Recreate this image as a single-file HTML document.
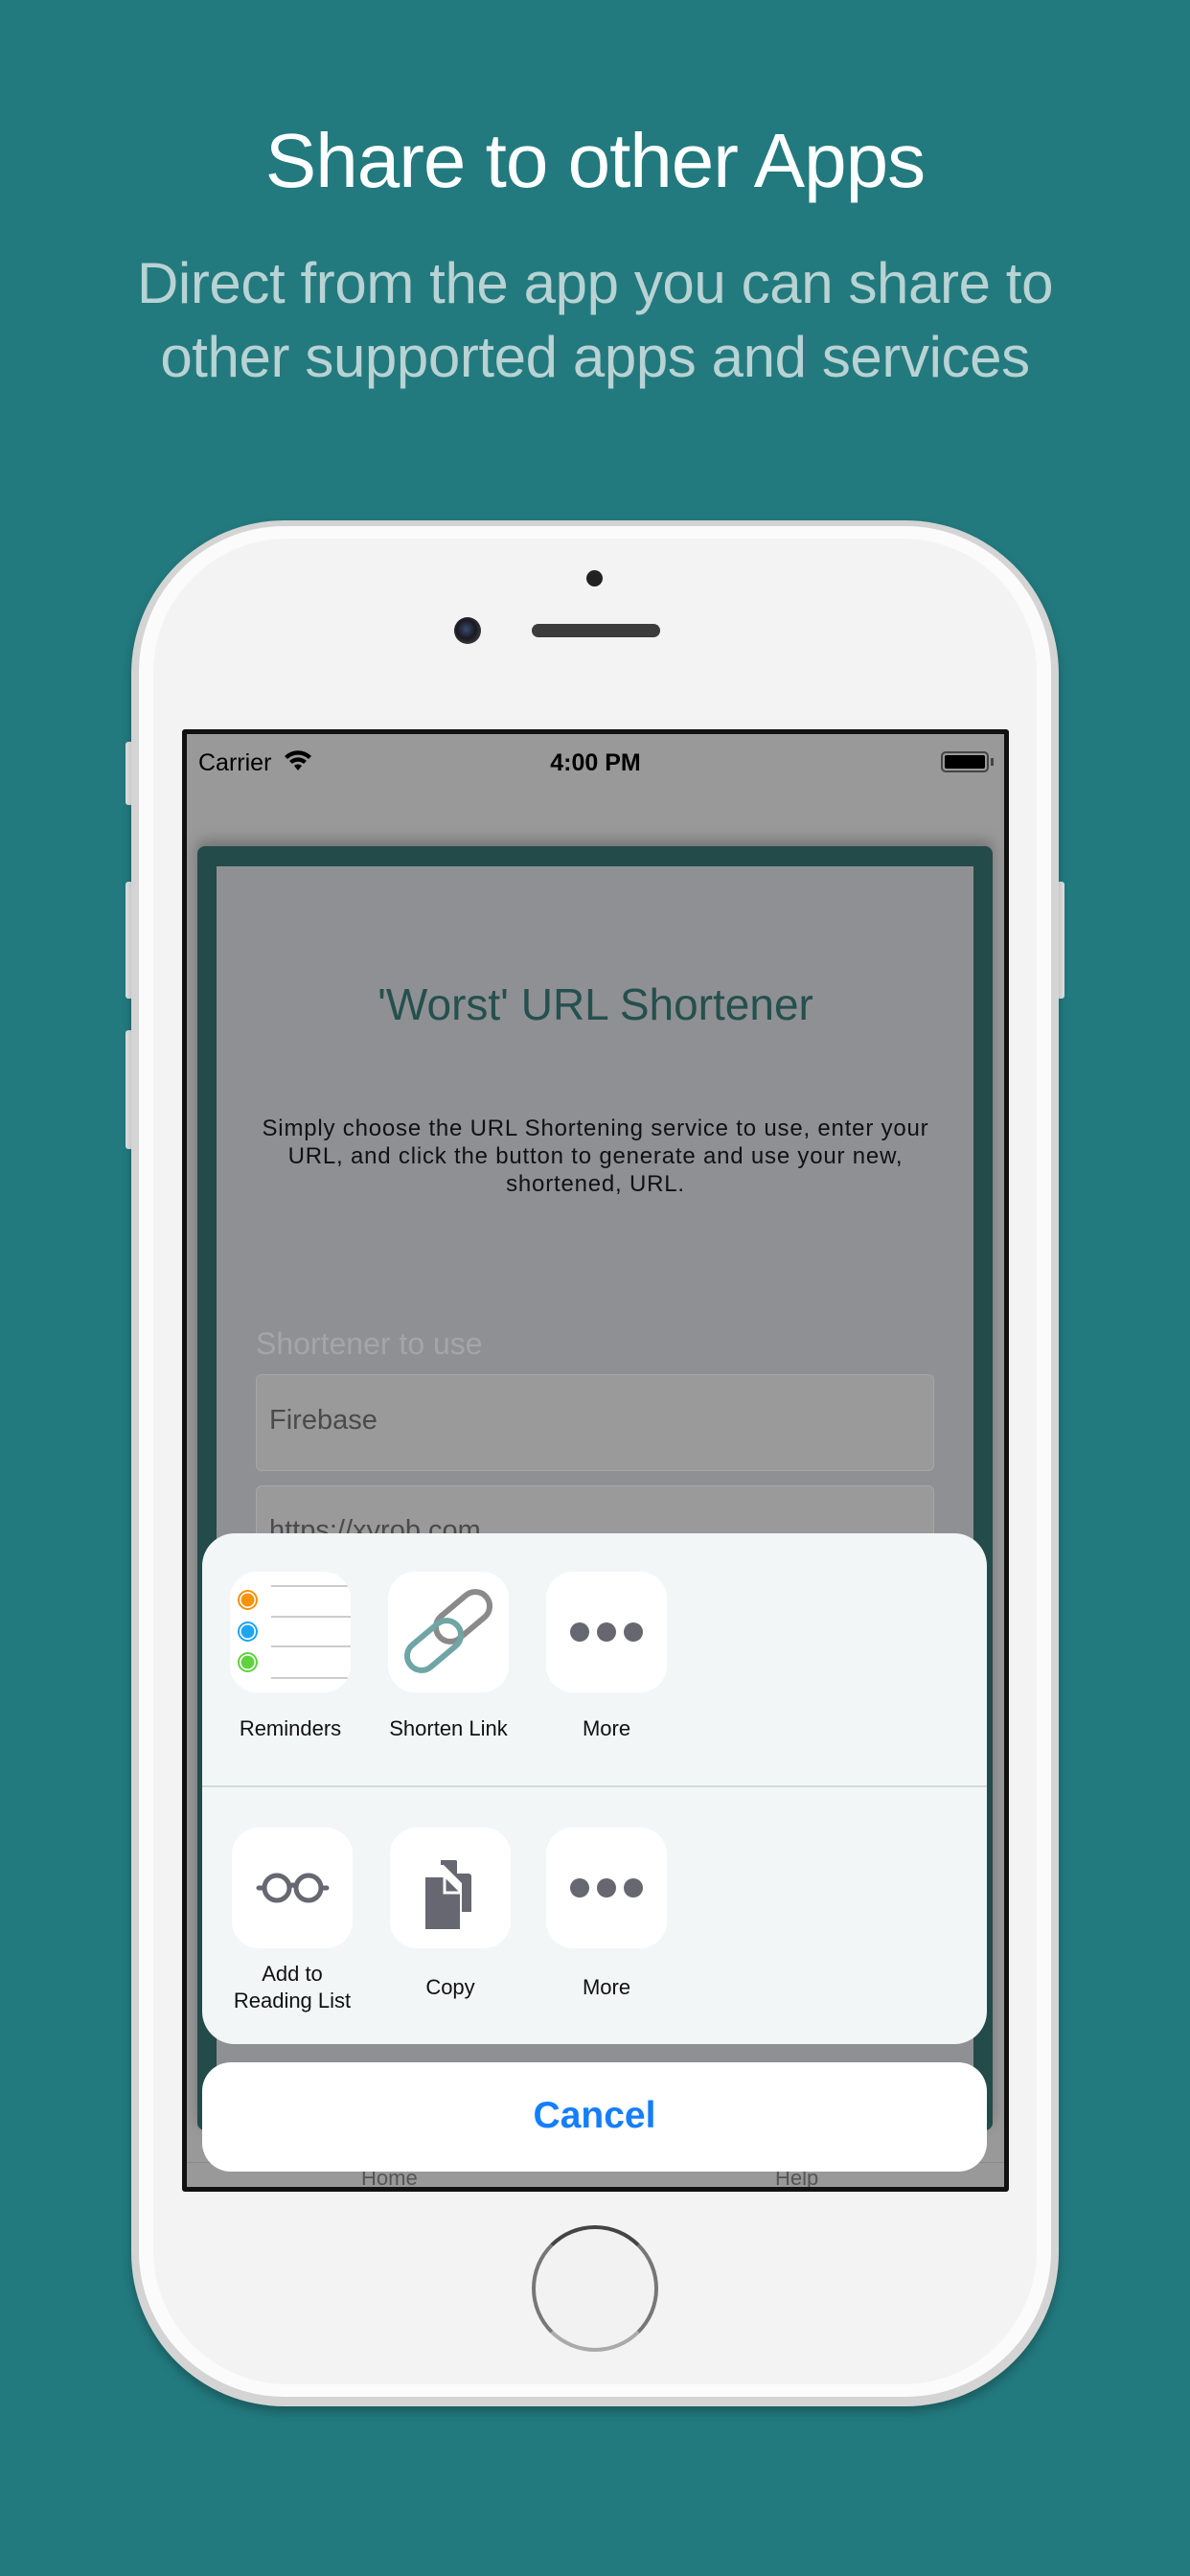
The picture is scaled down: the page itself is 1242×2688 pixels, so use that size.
<!DOCTYPE html>
<html><head><meta charset="utf-8"><style>
*{margin:0;padding:0;box-sizing:border-box}
body{width:1242px;height:2688px;background:#227a7e;position:relative;overflow:hidden;font-family:"Liberation Sans",sans-serif}
.a{position:absolute}
.t{left:0;width:1242px;text-align:center}
.lbl{position:absolute;font-size:22px;color:#111;text-align:center;width:200px;line-height:28px}
.ic{position:absolute;width:126px;height:126px;border-radius:28px;background:#fff}
</style></head><body>
<div class="a t" style="top:122px;font-size:80px;color:#fff;font-weight:300;letter-spacing:-1px">Share to other Apps</div>
<div class="a t" style="top:257px;font-size:60px;color:#b9d2d3;line-height:77px;letter-spacing:-0.4px">Direct from the app you can share to<br>other supported apps and services</div>

<div class="a" style="left:131px;top:774px;width:8px;height:66px;background:#e4e4e4;border-radius:3px"></div>
<div class="a" style="left:131px;top:920px;width:8px;height:122px;background:#e4e4e4;border-radius:3px"></div>
<div class="a" style="left:131px;top:1075px;width:8px;height:124px;background:#e4e4e4;border-radius:3px"></div>
<div class="a" style="left:1103px;top:920px;width:8px;height:122px;background:#e4e4e4;border-radius:3px"></div>

<div class="a" style="left:137px;top:543px;width:968px;height:1968px;border-radius:160px;background:#d4d4d4;box-shadow:0 6px 10px rgba(0,0,0,.25)"></div>
<div class="a" style="left:145px;top:549px;width:952px;height:1952px;border-radius:152px;background:#fbfbfb"></div>
<div class="a" style="left:160px;top:562px;width:922px;height:1926px;border-radius:140px;background:#f3f3f3"></div>
<div class="a" style="left:612px;top:595px;width:17px;height:17px;border-radius:50%;background:#222"></div>
<div class="a" style="left:474px;top:644px;width:28px;height:28px;border-radius:50%;background:radial-gradient(circle at 45% 45%,#3a4a70 0,#1a1a22 45%,#555 100%)"></div>
<div class="a" style="left:555px;top:651px;width:134px;height:14px;border-radius:7px;background:#3c3c3c"></div>
<div class="a" style="left:555px;top:2322px;width:132px;height:132px;border-radius:50%;border:4px solid #777;border-top-color:#444;border-bottom-color:#aaa;background:#f2f2f2"></div>

<div class="a" style="left:190px;top:761px;width:863px;height:1526px;background:#111;border-radius:3px"></div>
<div class="a" style="left:195px;top:766px;width:853px;height:1516px;background:#999;overflow:hidden">
  <div class="a" style="left:12px;top:16px;font-size:25px;color:#000">Carrier</div>
  <svg class="a" style="left:100px;top:14px" width="32" height="26" viewBox="0 0 32 26"><path d="M2 9a20 20 0 0 1 28 0l-3 3a16 16 0 0 0-22 0z M7 14a13 13 0 0 1 18 0l-3 3a9 9 0 0 0-12 0z M12 19a6 6 0 0 1 8 0l-4 5z" fill="#000"/></svg>
  <div class="a" style="left:0;width:853px;text-align:center;top:16px;font-size:25px;color:#000;font-weight:bold">4:00 PM</div>
  <div class="a" style="left:787px;top:18px;width:50px;height:22px;border:2px solid #444;border-radius:5px;padding:2px"><div style="width:100%;height:100%;background:#000;border-radius:2px"></div></div>
  <div class="a" style="left:839px;top:25px;width:3px;height:8px;background:#444"></div>
  <div class="a" style="left:11px;top:117px;width:830px;height:1340px;background:#234b49;border-radius:8px;box-shadow:0 -6px 14px rgba(0,0,0,.25)"></div>
  <div class="a" style="left:31px;top:138px;width:790px;height:1319px;background:#8f9094"></div>
  <div class="a" style="left:0;width:853px;text-align:center;top:255px;font-size:46px;color:#24504d">'Worst' URL Shortener</div>
  <div class="a" style="left:0;width:853px;text-align:center;top:397px;font-size:24px;color:#111;line-height:29px;letter-spacing:0.8px">Simply choose the URL Shortening service to use, enter your<br>URL, and click the button to generate and use your new,<br>shortened, URL.</div>
  <div class="a" style="left:72px;top:618px;font-size:32px;color:#a3a6a9">Shortener to use</div>
  <div class="a" style="left:72px;top:668px;width:708px;height:101px;border:1.5px solid #a7a7a7;border-radius:6px;background:#9a9a9a"></div>
  <div class="a" style="left:86px;top:700px;font-size:29px;color:#4a4a4a">Firebase</div>
  <div class="a" style="left:72px;top:784px;width:708px;height:101px;border:1.5px solid #a7a7a7;border-radius:6px;background:#9a9a9a"></div>
  <div class="a" style="left:86px;top:815px;font-size:29px;color:#4a4a4a">https://xyrob.com</div>
  <div class="a" style="left:0;top:1490px;width:853px;height:30px;background:#999;border-top:1px solid #888"></div>
  <div class="a" style="left:182px;top:1494px;font-size:22px;color:#555">Home</div>
  <div class="a" style="left:614px;top:1494px;font-size:22px;color:#555">Help</div>
</div>

<div class="a" style="left:211px;top:1600px;width:819px;height:533px;border-radius:34px;background:#f3f6f7;overflow:hidden">
  <div class="a" style="left:0;top:263px;width:819px;height:2px;background:#cfdadd"></div>
  <div class="ic" style="left:29px;top:40px;overflow:hidden">
    <div class="a" style="left:43px;top:14px;width:83px;height:2px;background:#ccc"></div>
    <div class="a" style="left:43px;top:46px;width:83px;height:2px;background:#ccc"></div>
    <div class="a" style="left:43px;top:77px;width:83px;height:2px;background:#ccc"></div>
    <div class="a" style="left:43px;top:110px;width:83px;height:2px;background:#ccc"></div>
    <div class="a" style="left:8px;top:19px;width:21px;height:21px;border-radius:50%;border:2px solid #f7920a;background:radial-gradient(#f7920a 55%,#fff 60%)"></div>
    <div class="a" style="left:8px;top:52px;width:21px;height:21px;border-radius:50%;border:2px solid #1ea5f2;background:radial-gradient(#1ea5f2 55%,#fff 60%)"></div>
    <div class="a" style="left:8px;top:84px;width:21px;height:21px;border-radius:50%;border:2px solid #5fd33e;background:radial-gradient(#5fd33e 55%,#fff 60%)"></div>
  </div>
  <div class="ic" style="left:194px;top:40px">
    <svg width="126" height="126" viewBox="0 0 126 126">
      <rect x="46" y="32" width="64" height="30" rx="15" transform="rotate(-40 78 47)" fill="none" stroke="#8a8a8a" stroke-width="6"/>
      <rect x="16" y="62" width="64" height="30" rx="15" transform="rotate(-40 48 77)" fill="none" stroke="#6fa6a5" stroke-width="6"/>
    </svg>
  </div>
  <div class="ic" style="left:359px;top:40px">
    <div class="a" style="left:25px;top:53px;width:20px;height:20px;border-radius:50%;background:#666770"></div>
    <div class="a" style="left:53px;top:53px;width:20px;height:20px;border-radius:50%;background:#666770"></div>
    <div class="a" style="left:81px;top:53px;width:20px;height:20px;border-radius:50%;background:#666770"></div>
  </div>
  <div class="lbl" style="left:-8px;top:190px">Reminders</div>
  <div class="lbl" style="left:157px;top:190px">Shorten Link</div>
  <div class="lbl" style="left:322px;top:190px">More</div>
  <div class="ic" style="left:31px;top:307px">
    <svg width="126" height="126" viewBox="0 0 126 126"><circle cx="47" cy="63" r="13" fill="none" stroke="#666770" stroke-width="5"/><circle cx="80" cy="63" r="13" fill="none" stroke="#666770" stroke-width="5"/><path d="M60 62 Q63.5 58 67 62 M34 63h-6 M93 63h6" stroke="#666770" stroke-width="5" fill="none" stroke-linecap="round"/></svg>
  </div>
  <div class="ic" style="left:196px;top:307px">
    <svg width="126" height="126" viewBox="0 0 126 126">
      <path d="M53 34h16l16 16v38h-10v-30l-19-19h-3z" fill="#666770"/>
      <path d="M70 32v16h16" fill="#fff"/>
      <path d="M37 52h20l16 16v38h-36z" fill="#666770"/>
      <path d="M57 50v18h18" fill="none" stroke="#fff" stroke-width="3"/>
    </svg>
  </div>
  <div class="ic" style="left:359px;top:307px">
    <div class="a" style="left:25px;top:53px;width:20px;height:20px;border-radius:50%;background:#666770"></div>
    <div class="a" style="left:53px;top:53px;width:20px;height:20px;border-radius:50%;background:#666770"></div>
    <div class="a" style="left:81px;top:53px;width:20px;height:20px;border-radius:50%;background:#666770"></div>
  </div>
  <div class="lbl" style="left:-6px;top:446px">Add to<br>Reading List</div>
  <div class="lbl" style="left:159px;top:460px">Copy</div>
  <div class="lbl" style="left:322px;top:460px">More</div>
</div>
<div class="a" style="left:211px;top:2152px;width:819px;height:114px;border-radius:30px;background:#fff"></div>
<div class="a" style="left:211px;top:2186px;width:819px;text-align:center;font-size:39px;font-weight:bold;color:#157efb">Cancel</div>
</body></html>
